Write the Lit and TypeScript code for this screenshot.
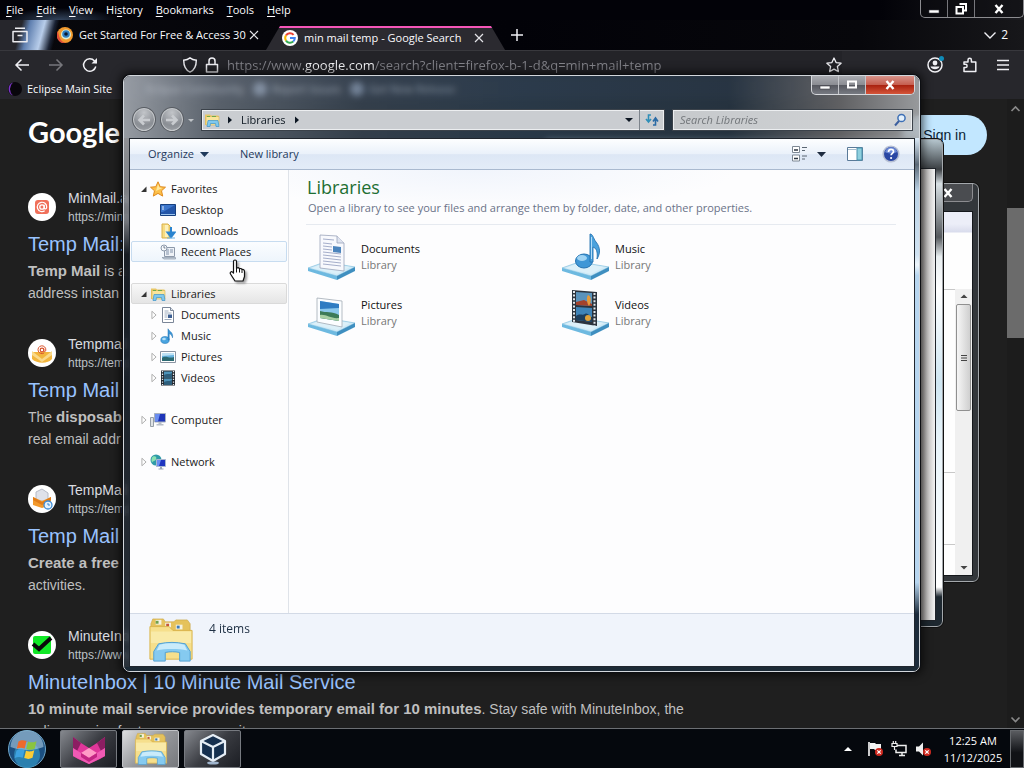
import { LitElement, html, css, svg, nothing } from "lit";
import { customElement, property } from "lit/decorators.js";

const shared = css`
  * { box-sizing: border-box; }
  button { font: inherit; color: inherit; background: none; border: 0; padding: 0; margin: 0; display: flex; align-items: center; text-align: left; }
  a { color: inherit; text-decoration: none; }
  svg { display: block; flex: none; }
`;

const icon = (size: number, body: unknown, box = size) =>
  html`<svg width=${size} height=${size} viewBox="0 0 ${box} ${box}" fill="none" aria-hidden="true">${body}</svg>`;

const closeGlyph = svg`<path d="M4 4l8 8M12 4l-8 8" stroke="#e4e4e8" stroke-width="1.2"/>`;

const folderSmall = svg`
  <path d="M1 4V2.5h5l1 1h7.5V13H1z" fill="#e8c767"/>
  <path d="M2 4.5h13V13H2z" fill="#f9e59b" stroke="#d8b24e" stroke-width=".6"/>
  <path d="M3 4.5h3M8 4.5h4" stroke="#6faa4b" stroke-width="1.2"/>
  <path d="M3 14.5l1-6h10l1 6h-3l-.5-3h-5l-.5 3z" fill="#7fc8ee" stroke="#3d93c8" stroke-width=".7"/>`;

const folderLarge = svg`
  <path d="M3 7l2-5h11l2 3h9l2-2h12l3 4v36H3z" fill="#e5c25c" stroke="#c9a33f" stroke-width=".6"/>
  <path d="M8 3h6v5H8z" fill="#f5f2e0"/><path d="M8 4h3v3H8z" fill="#6ea04e"/>
  <path d="M18 6h6v5h-6z" fill="#f5f2e0"/><path d="M19 7h3v3h-3z" fill="#c4553a"/>
  <path d="M29 8h7v5h-7z" fill="#f5f2e0"/><path d="M30 9h3v3h-3z" fill="#3c7ab5"/>
  <path d="M2 10h20l4 4h20v30H2z" fill="#f6df8c" stroke="#d9b44c"/>
  <path d="M3 15h42v12H3z" fill="#fbeeb4" opacity=".7"/>
  <path d="M6 46V36l5-8c10-2 18-2 28 0l5 8v10H33v-9c-5-1-10-1-15 0v9z" fill="#85caf0" stroke="#4f9fd2"/>
  <path d="M12 29c9-2 17-2 26 0l3 6c-10-2-22-2-32 0z" fill="#c9ebfb"/>`;

const small: Record<string, unknown> = {
  star: svg`<path d="M8 .8l2.2 4.9 5.3.5-4 3.6 1.2 5.3L8 12.4l-4.7 2.7 1.2-5.3-4-3.6 5.3-.5z" fill="#fcc04a" stroke="#e08a1e"/><path d="M8 3l1.400 3.600 3 .4-6.400 3z" fill="#ffe9a0"/>`,
  desktop: svg`<path d="M.5 2.500h15v11H.5z" fill="#2456a8" stroke="#17407f"/><path d="M1 3h14L3 10H1z" fill="#3c76cc"/><path d="M1 12.500h14" stroke="#9cc4ee"/><path d="M2 5h2M2 7h2" stroke="#dbe9fb"/>`,
  downloads: svg`<path d="M2 1h6l2 2v12H2z" fill="#f7dc83" stroke="#d9b04a"/><path d="M5 2h3v12H5z" fill="#fdf0bb"/><path d="M11 4v6M7.500 9.500L11 14l3.500-4.500z" fill="#2b84cf" stroke="#2b84cf" stroke-width="2"/><path d="M7 15h8" stroke="#6bb1e5"/>`,
  recent: svg`<path d="M4.500 3.500h10v9h-10z" fill="#eef2f7" stroke="#8d99aa"/><path d="M6 6h3M10 6h3M6 8h3M10 8h3M6 10h3" stroke="#8192aa"/><path d="M2 13.500h13.500v1.500H4z" fill="#c5cfdb" stroke="#8d99aa" stroke-width=".7"/><circle cx="4" cy="4" r="3" fill="#f8fafc" stroke="#8d99aa"/><path d="M4 2v2h1.500" stroke="#55657b" stroke-width=".8"/>`,
  libraries: folderSmall,
  documents: svg`<path d="M2.500.5h8l3 3v12h-11z" fill="#fff" stroke="#7b8698"/><path d="M10.500.5v3h3" stroke="#7b8698" fill="#dfe6ee"/><path d="M4.500 4h4M4.500 6h7M4.500 8h3M4.500 10h3M4.500 12.500h7" stroke="#8797ad" stroke-width=".8"/><path d="M8 7.500h4v3.500H8z" fill="#3d5f92"/>`,
  music: svg`<ellipse cx="5" cy="12" rx="4.200" ry="3.400" fill="#4aa5e0" stroke="#2277b8" stroke-width=".6"/><path d="M8 12V.8c1.500 3 5.500 3.500 4.500 9-.5-2.500-2-4-3.300-4V12z" fill="#3b97d8" stroke="#1c6fae" stroke-width=".5"/><ellipse cx="4" cy="11" rx="1.800" ry="1.200" fill="#b4def7"/>`,
  pictures: svg`<path d="M.5 2.500h15v11H.5z" fill="#fff" stroke="#8a94a2"/><path d="M2 4h12v8H2z" fill="#67b3df"/><path d="M2 9c4-3 7 1 12-1v4H2z" fill="#2c6a72"/><path d="M2 4h12v2L2 7z" fill="#bfe2f5"/>`,
  videos: svg`<path d="M1 .5h14v15H1z" fill="#20262e"/><path d="M4 1.500h8v6H4zM4 8.500h8v6H4z" fill="#4d93b9"/><path d="M4 5c3-2 5 0 8-2v4.500H4zM4 12c3-2 5 0 8-2v4.500H4z" fill="#2d5e7c"/><path d="M2.500 1v14M13.500 1v14" stroke="#e6ecf0" stroke-width="1.300" stroke-dasharray="1.300 1.300"/>`,
  computer: svg`<path d="M.5 5.500h3v9h-3z" fill="#dfe3e6" stroke="#98a0a8"/><path d="M4.500 1.500h11v8.500h-11z" fill="#1e35b8" stroke="#a8b2c0"/><path d="M5 2h5L8 9.500H5z" fill="#6a8df0"/><path d="M8.500 10h3v2h2v1.500h-7V12h2z" fill="#b7bec8"/>`,
  network: svg`<circle cx="6" cy="6" r="5.500" fill="#2f9aa8"/><path d="M3 2.500c3-1 4 1 3 3s-3 1-4 3c-1-2-.5-5 1-6z" fill="#8ce0b0"/><path d="M6.500 5.500h9v7h-9z" fill="#1e35c0" stroke="#a8b8d0"/><path d="M7 6h4l-2 6H7z" fill="#6a8df0"/><path d="M10 13h2v1.500h1.500v1h-5v-1H10z" fill="#9aa6b5"/>`,
};

const plate = svg`
  <path d="M0 35L17 29 47 34 29 43z" fill="#cfeaf7" stroke="#8fc6e2" stroke-width=".8"/>
  <path d="M4 35l13-5 25 4-13 7z" fill="#dcf0f9"/>
  <path d="M0 35l29 8v4L0 38z" fill="#6db9e0"/><path d="M29 43l18-9v4L29 47z" fill="#3f8fc0"/>`;

const large: Record<string, unknown> = {
  Documents: svg`${plate}<path d="M12 2l17 1 7 7v28l-24-3z" fill="#f8f9fd" stroke="#9aa3ba" stroke-width=".8"/><path d="M29 3v7h7" fill="#dfe4f0" stroke="#9aa3ba" stroke-width=".8"/><path d="M15 6l11 1M15 10l9 1M15 13l9 1M15 16l9 1M15 19l18 2M15 22l18 2M15 25l18 2M15 28l18 2M15 31l18 2" stroke="#9ba5c4" stroke-width=".9"/><path d="M25 13l8 1v6l-8-1z" fill="#4b84bd"/>`,
  Music: svg`${plate}<ellipse cx="22" cy="28" rx="8.500" ry="7" fill="#3f97d6" stroke="#2573b1"/><ellipse cx="20" cy="25" rx="5" ry="3" fill="#9fd3f3"/><path d="M28 29V1c3 0 3 4 6 8 5 6 4 12 1 17 1-8-1-11-4-12v15z" fill="#4ba2dd" stroke="#2573b1" stroke-width=".9"/><path d="M29.500 4v22" stroke="#b4defa"/>`,
  Pictures: svg`${plate}<path d="M9 9l25 3v26L9 33z" fill="#fbfdff" stroke="#a2abb5" stroke-width=".8"/><path d="M12 12l19 3v17l-19-3z" fill="#8cc8ec"/><path d="M12 12l19 3v4l-19 1z" fill="#2f7cc2"/><path d="M12 22c6 2 12 0 19 4v6l-19-3z" fill="#3c7a58"/><path d="M12 26c6-1 11 4 19 3v3l-19-3z" fill="#a8cfa4"/>`,
  Videos: svg`${plate}<path d="M10 1l25 2v34l-25-4z" fill="#2b333d"/><path d="M14 3l16 1v13l-16-1z" fill="#5a93bc"/><path d="M14 18l16 1v14l-16-2z" fill="#3f84b8"/><path d="M14 13l8-2 8 4v2l-16-1z" fill="#a3422c"/><path d="M26 6c4 1 3 8 1 11-2-2-3-9-1-11z" fill="#e59a3b"/><path d="M14 27c4-3 6 0 9-2s5 4 7 3v5l-16-2z" fill="#1e3f5e"/><circle cx="26" cy="29" r="3" fill="#e0a23a"/><path d="M12 2v31M32.500 4v33" stroke="#e4e9ee" stroke-width="2" stroke-dasharray="2 1.600"/>`,
};

@customElement("caption-buttons")
class CaptionButtons extends LitElement {
  @property({ type: Boolean, reflect: true }) active = false;
  @property({ type: Boolean, reflect: true }) restored = false;
  static styles = [shared, css`
    :host { display: flex; height: 18px; border: 1px solid #8c8c90; border-top: 0; border-radius: 0 0 5px 5px; overflow: hidden; background: rgba(12, 12, 16, .5); }
    button { width: 27px; justify-content: center; border-right: 1px solid #77777c; }
    .close { width: 48px; border-right: 0; }
    :host([active]) { height: 19px; border-color: #d6d8dc; background: linear-gradient(#a9abb0, #8b8d93 48%, #55575e 50%, #777a82); }
    :host([active]) button { border-color: #c4c6ca; }
    :host([active]) .close { background: linear-gradient(#d8938a, #c65f50 48%, #a8200e 50%, #d4553a); }
  `];
  render() {
    return html`
      <button aria-label="Minimize">${icon(16, svg`<path d="M3 9h10v3H3z" fill="#fff" stroke="#3c3c44" stroke-width=".6"/>`)}</button>
      <button aria-label="Maximize">${icon(16, this.restored
        ? svg`<path d="M6.500 3h6.500v6.500h-2M3.500 6H10v6.500H3.500z" stroke="#fff" stroke-width="2"/>`
        : svg`<path d="M4 4.500h8v6H4z" stroke="#fff" stroke-width="2"/>`)}</button>
      <button class="close" aria-label="Close">${icon(16, svg`<path d="M4.500 4l7 8M11.500 4l-7 8" stroke="#fff" stroke-width="2.400"/>`)}</button>`;
  }
}

@customElement("search-result")
class SearchResult extends LitElement {
  @property() site = "";
  @property() url = "";
  @property() heading = "";
  @property({ attribute: false }) mark: unknown = nothing;
  static styles = [shared, css`
    :host { display: block; }
    .source { display: flex; align-items: center; gap: 12px; }
    .mark { width: 28px; height: 28px; border-radius: 50%; background: #fff; display: grid; place-items: center; overflow: hidden; }
    .site { font-size: 14px; line-height: 20px; color: #dadce0; }
    .url { font-size: 12px; line-height: 18px; color: #bdc1c6; }
    h3 { margin: 5px 0 3px; font-size: 20px; line-height: 26px; font-weight: 400; color: #99c3ff; white-space: nowrap; }
    p { margin: 0; font-size: 14px; line-height: 22px; color: #bfbfbf; white-space: nowrap; }
    ::slotted(b) { font-size: 15px; line-height: 20px; }
  `];
  render() {
    return html`
      <div class="source"><span class="mark">${this.mark}</span>
        <div><div class="site">${this.site}</div><div class="url">${this.url}</div></div></div>
      <h3><a href="#">${this.heading}</a></h3>
      <p><slot></slot></p>`;
  }
}

@customElement("browser-window")
class BrowserWindow extends LitElement {
  static styles = [shared, css`
    :host { display: flex; flex-direction: column; min-height: 0; color: #fbfbfe; font: 11px/16px "Open Sans", "Noto Sans", sans-serif; }
    .menu { display: flex; align-items: flex-start; justify-content: space-between; height: 20px; padding: 0 0 0 6px; background: radial-gradient(60px 12px at 60px 20px, #33445c, transparent), linear-gradient(90deg, #020208 86%, #1c1c20); }
    .items { display: flex; gap: 13px; line-height: 20px; }
    .items u { text-underline-offset: 2px; }
    .tabs { display: flex; align-items: center; height: 30px; padding: 0 16px 0 12px; background: linear-gradient(105deg, #26262c 22px, #6080b0 30px, #b8cdea 44px, #1a2233 54px, transparent 58px), linear-gradient(90deg, #08080c, #020208 50%, #07070b 84%, #17171a); }
    .view { margin-right: 29px; }
    .tab { display: flex; align-items: center; gap: 6px; min-width: 0; }
    .tab .title { width: 161px; white-space: nowrap; }
    .active { align-self: flex-end; height: 24px; margin-left: 4px; padding: 0 18px 0 16px; background: linear-gradient(#f556b8 2px, #2b2a30 2px); clip-path: polygon(14px 0, calc(100% - 14px) 0, 100% 100%, 0 100%); }
    .add { margin-left: 4px; }
    .list { margin-left: auto; gap: 4px; line-height: 22px; font-size: 12px; }
    .nav { display: flex; align-items: center; height: 28px; padding: 0 14px; background: #27272c; border-top: 1px solid #38383d; }
    .history { display: flex; gap: 18px; flex: none; }
    .address { display: flex; align-items: center; gap: 6px; flex: 0 1 660px; margin-left: 84px; background: #232328; height: 27px; min-width: 0; }
    .address input { flex: 1; min-width: 0; border: 0; padding: 0 0 0 1px; height: 24px; font: 13px/24px "Open Sans", "Noto Sans", sans-serif; color: transparent; -webkit-text-fill-color: transparent; background: linear-gradient(90deg, #85858c 77px, #fbfbfe 77px, #fbfbfe 149px, #85858c 149px); -webkit-background-clip: text; background-clip: text; outline: 0; }
    .tools { display: flex; gap: 18px; margin-left: auto; }
    .marks { display: flex; align-items: center; height: 21px; padding-left: 7px; background: #27272c; gap: 8px; }
    .marks a { display: flex; align-items: center; gap: 4px; }
    .marks .next { margin-left: 26px; }
    .page { flex: 1; min-height: 0; display: grid; grid-template-columns: 1fr 17px; background: #1f1f1f; font-family: "Liberation Sans", Arial, sans-serif; overflow: hidden; }
    .content { min-width: 0; min-height: 0; overflow: hidden; padding: 0 20px 0 28px; }
    .head { display: flex; justify-content: space-between; align-items: flex-start; padding-top: 16px; height: 89px; }
    .logo { font: 700 29px/34px "Lato", sans-serif; color: #fff; }
    .signin { height: 40px; padding: 0 21px; border-radius: 20px; background: #c2e7ff; color: #0a1d35; font-size: 14px; }
    .results { display: flex; flex-direction: column; gap: 30px; }
    .scroll { background: #1c1c1c; display: flex; flex-direction: column; }
    .thumb { height: 130px; background: #6b6b6b; margin: 93px 0 auto; }
  `];
  render() {
    const chevron = (d: string) => icon(16, svg`<path d=${d} stroke="#8a8a8a" stroke-width="1.600"/>`);
    const globe = icon(16, svg`<circle cx="8" cy="8" r="7" fill="#b8c4da"/>`);
    return html`
      <div class="menu">
        <nav class="items">${["File", "Edit", "View", "History", "Bookmarks", "Tools", "Help"].map((m) => {
          const k = m === "History" ? 2 : 0;
          return html`<button><span>${m.slice(0, k)}<u>${m[k]}</u>${m.slice(k + 1)}</span></button>`;
        })}</nav>
        <caption-buttons restored></caption-buttons>
      </div>
      <div class="tabs">
        <button class="view" aria-label="View">${icon(16, svg`<path d="M1 4.500h14v10.200H1zM3 1.200h10" stroke="#ececf0" stroke-width="1.500" stroke-linejoin="round"/><path d="M5.500 8.500h5" stroke="#ececf0" stroke-width="1.500"/>`)}</button>
        <div class="tab">
          ${icon(16, svg`<circle cx="8" cy="8" r="8" fill="#f29a2e"/><path d="M1 4a8 8 0 0 0 9 12c-5 0-8-4-9-12z" fill="#e0503a"/><circle cx="9" cy="7.500" r="5" fill="#d9ecd0"/><circle cx="9" cy="7" r="3.800" fill="#2f7ec0"/><circle cx="9" cy="7" r="1.800" fill="#0b1a2c"/>`)}
          <span class="title">Get Started For Free &amp; Access 30</span>
          <button aria-label="Close tab">${icon(16, closeGlyph)}</button>
        </div>
        <div class="tab active">
          ${icon(16, svg`<circle cx="8" cy="8" r="8" fill="#fff"/><path d="M11.600 4.800A4.800 4.800 0 0 0 4 5.400" stroke="#ea4335" stroke-width="2"/><path d="M4 5.400a4.800 4.800 0 0 0 0 5.200" stroke="#fbbc04" stroke-width="2"/><path d="M4 10.600a4.800 4.800 0 0 0 7.200 1" stroke="#34a853" stroke-width="2"/><path d="M8 8h4.800a4.800 4.800 0 0 1-1.600 3.600" stroke="#4285f4" stroke-width="2"/>`)}
          <span class="title">min mail temp - Google Search</span>
          <button aria-label="Close tab">${icon(16, closeGlyph)}</button>
        </div>
        <button class="add" aria-label="New tab">${icon(16, svg`<path d="M8 2v12M2 8h12" stroke="#f0f0f4" stroke-width="1.500"/>`)}</button>
        <button class="list">${icon(14, svg`<path d="M1.500 4.500L7 10l5.500-5.500" stroke="#f0f0f4" stroke-width="1.400"/>`)}<span>2</span></button>
      </div>
      <div class="nav">
        <div class="history">
          <button aria-label="Back">${icon(16, svg`<path d="M15 8H2M7.500 2.500L2 8l5.500 5.500" stroke="#f0f0f4" stroke-width="1.500"/>`)}</button>
          <button aria-label="Forward">${icon(16, svg`<path d="M1 8h13M8.500 2.500L14 8l-5.500 5.500" stroke="#77777c" stroke-width="1.500"/>`)}</button>
          <button aria-label="Reload">${icon(16, svg`<path d="M13.800 9.500A6.200 6.200 0 1 1 12.500 4l2 2" stroke="#f0f0f4" stroke-width="1.500"/><path d="M15 1v5.500H9.500z" fill="#f0f0f4"/>`)}</button>
        </div>
        <div class="address">
          ${icon(16, svg`<path d="M8 .9c2 1.600 4 2.100 6.300 2.300 0 5.800-1.800 9.800-6.300 12-4.500-2.200-6.300-6.200-6.300-12C4 3 6 2.500 8 .9z" stroke="#f0f0f4" stroke-width="1.400"/>`)}
          ${icon(16, svg`<path d="M2.500 7.500h11v7.500h-11zM5 7V4a3 3 0 0 1 6 0v3" stroke="#f0f0f4" stroke-width="1.500" stroke-linejoin="round"/>`)}
          <input aria-label="Address" readonly .value=${"https://www.google.com/search?client=firefox-b-1-d&q=min+mail+temp"}>
          <button aria-label="Bookmark this page">${icon(16, svg`<path d="M8 1l2.100 4.600 5 .6-3.700 3.400 1 5L8 12.100l-4.400 2.500 1-5L.9 6.200l5-.6z" stroke="#f0f0f4" stroke-width="1.300" stroke-linejoin="round"/>`)}</button>
        </div>
        <div class="tools">
          <button aria-label="Account">${icon(18, svg`<circle cx="9" cy="9" r="7" stroke="#f0f0f4" stroke-width="1.500"/><circle cx="9" cy="7" r="2.400" fill="#f0f0f4"/><path d="M4.500 10.500h9c-1 3.500-8 3.500-9 0z" fill="#f0f0f4"/><circle cx="15.500" cy="2.500" r="2.500" fill="#0f8cb8"/>`)}</button>
          <button aria-label="Extensions">${icon(16, svg`<path d="M2 14.500v-4h1.500a1.600 1.600 0 0 0 0-3.200H2V5h4V3a1.700 1.700 0 0 1 3.400 0v2h4.400v9.500z" stroke="#f0f0f4" stroke-width="1.500" stroke-linejoin="round"/>`)}</button>
          <button aria-label="Menu">${icon(14, svg`<path d="M1 2.500h12M1 7h12M1 11.500h12" stroke="#f0f0f4" stroke-width="1.400"/>`)}</button>
        </div>
      </div>
      <div class="marks">
        <a href="#">${icon(16, svg`<circle cx="8" cy="8" r="7" fill="#08060c"/><path d="M6 1.500a7 7 0 0 0 0 13 8.500 8.500 0 0 1 0-13z" fill="#7d35c8"/>`)}Eclipse Main Site</a>
        <a class="next" href="#">Eclipse Community</a>
        <a href="#">${globe}Report Issues</a>
        <a href="#">${globe}Get New Release</a>
      </div>
      <div class="page">
        <div class="content">
          <div class="head"><span class="logo">Google</span><button class="signin">Sign in</button></div>
          <div class="results">
            <search-result site="MinMail.app" url="https://minmail.app" heading="Temp Mail:"
              .mark=${icon(28, svg`<rect x="7" y="7" width="14" height="14" rx="3" fill="#f0705a"/><circle cx="14" cy="14" r="2.200" stroke="#fff" stroke-width="1.300"/><path d="M16.200 11.800v3c0 1.800 2.500 1.500 2.500-.8a4.700 4.700 0 1 0-2 3.800" stroke="#fff" stroke-width="1.200"/>`)}>
              <b>Temp Mail</b> is a<br>address instan</search-result>
            <search-result site="Tempmail" url="https://tempmail" heading="Temp Mail"
              .mark=${icon(28, svg`<path d="M4 13h20v7c-4 5-15 5-20 0z" fill="#f2b53c"/><path d="M4 12l10 8 10-8v4l-10 7-10-7z" fill="#f9d98a"/><circle cx="14" cy="11" r="1.800" stroke="#d9542e" stroke-width="1.200"/><path d="M15.800 9.500v2.500c0 1.200 2 1 2-1a3.900 3.900 0 1 0-1.800 3" stroke="#d9542e"/>`)}>
              The <b>disposab</b><br>real email addr</search-result>
            <search-result site="TempMail" url="https://tempmail" heading="Temp Mail"
              .mark=${icon(28, svg`<path d="M8 7l6-3 6 4v8H8z" fill="#dfe2ea" stroke="#b5bac6"/><path d="M5 12l9 4 9-4v8l-9 3-9-3z" fill="#f39a2c"/><path d="M5 12l9 5 9-5v3l-9 5-9-5z" fill="#e07d1a"/><circle cx="20" cy="20" r="4" fill="#e4f1fc" stroke="#3b8bd6" stroke-width="1.300"/><path d="M20 18v2h2" stroke="#3b8bd6"/>`)}>
              <b>Create a free</b><br>activities.</search-result>
            <search-result site="MinuteInbox" url="https://www.minuteinbox" heading="MinuteInbox | 10 Minute Mail Service"
              .mark=${icon(28, svg`<rect x="5" y="5" width="18" height="18" rx="2" fill="#12e827"/><path d="M5 13l6 5L23 7" stroke="#0a0a0a" stroke-width="4"/>`)}>
              <b>10 minute mail service provides temporary email for 10 minutes</b>. Stay safe with MinuteInbox, the<br>online service for temporary security.</search-result>
          </div>
        </div>
        <div class="scroll">${chevron("M4.500 12L8.500 8l4 4")}<div class="thumb"></div>${chevron("M4.500 5.500l4 4 4-4")}</div>
      </div>`;
  }
}

@customElement("explorer-window")
class ExplorerWindow extends LitElement {
  static styles = [shared, css`
    :host { display: flex; flex-direction: column; border: 1px solid #d3d7dc; border-radius: 7px; overflow: hidden; color: #1a1a1a; font: 11px/16px "Open Sans", "Noto Sans", sans-serif; box-shadow: 0 0 0 1px #0c0e12, 0 0 10px 3px rgba(0, 0, 0, .65); backdrop-filter: blur(3px); background: rgba(60, 72, 88, .2); }
    .glass { padding: 0 5px 0 6px; background: linear-gradient(90deg, rgba(178, 184, 192, .8), rgba(122, 134, 148, .6) 12%, rgba(66, 86, 106, .5) 30%, rgba(44, 68, 90, .6) 50%, rgba(38, 58, 76, .6) 76%, rgba(110, 110, 112, .8) 90%, rgba(180, 182, 184, .8)); }
    .caption { display: flex; justify-content: flex-end; height: 31px; align-items: flex-start; margin-right: -1px; }
    .bar { display: flex; align-items: center; height: 31px; padding-bottom: 6px; gap: 7px; }
    .arrows { display: flex; align-items: center; gap: 4px; width: 64px; padding-left: 2px; }
    .round { width: 25px; height: 25px; border-radius: 50%; border: 1px solid #595d63; background: radial-gradient(circle at 50% 20%, #c2c5c9, #8a8e94 60%, #a5a9ae); box-shadow: inset 0 0 0 1px #c5c8cb; justify-content: center; }
    .crumbs { display: flex; flex: 1; height: 22px; border: 1px solid #3b424a; box-shadow: inset 0 0 0 1px #eceef0; background: #cacdd1; padding: 0 4px 0 2px; align-items: center; min-width: 0; color: #0c1620; }
    .crumbs .drop { margin-left: auto; margin-right: 5px; }
    .crumbs .refresh { height: 20px; border-left: 1px solid #7d848c; padding-left: 4px; }
    .crumbs .locations { margin-left: 5px; }
    .crumbs .name { margin: 0 6px; }
    .find { display: flex; flex: 0 0 241px; height: 22px; border: 1px solid #3b424a; box-shadow: inset 0 0 0 1px #eceef0; background: linear-gradient(90deg, #c6c9cc, #d2d4d6); align-items: center; padding: 0 5px 0 7px; margin-right: 1px; }
    .find input { flex: 1; min-width: 0; border: 0; background: none; outline: 0; font: italic 11px/16px "Open Sans", "Noto Sans", sans-serif; padding: 0; }
    .find input::placeholder { color: #72767a; opacity: 1; }
    .body { display: grid; grid-template-columns: 5px 1fr 4px; flex: 1; min-height: 0; }
    .left { background: linear-gradient(rgba(170, 172, 176, .8), rgba(130, 134, 140, .8) 16%, rgba(20, 26, 34, .8) 22%, rgba(45, 55, 66, .7)); }
    .right { background: linear-gradient(#dcebf8, #5c6a78 5%, #bcd3e6 10%, #cfe2f2 22%, #eef6fc 24%, #b7d6f0 26%, #b7d6f0 84%, #1c2b3b 90%); }
    .base { height: 4px; background: #1c2a36; }
    .client { display: flex; flex-direction: column; min-width: 0; min-height: 0; border: 1px solid #20262e; background: #fdfdfe; }
    .command { display: flex; align-items: center; height: 31px; padding: 0 14px 0 18px; color: #1e395b; background: linear-gradient(#fdfeff, #eaf1fa 50%, #dde7f5 52%, #e3ecf8); border-bottom: 1px solid #a9b9cf; gap: 31px; }
    .command button { gap: 6px; }
    .icons { display: flex; margin-left: auto; gap: 18px; }
    .icons .view { gap: 8px; padding-right: 2px; }
    .panes { display: grid; grid-template-columns: 159px 1fr; flex: 1; min-height: 0; }
    .tree { border-right: 1px solid #dfe3e9; padding: 8px 0 0; display: flex; flex-direction: column; gap: 21px; }
    .group { display: flex; flex-direction: column; }
    .row { height: 21px; width: 156px; gap: 5px; padding-left: 7px; margin-left: 1px; border: 1px solid transparent; white-space: nowrap; }
    .row .arrow { margin-right: -4px; }
    .row.child { padding-left: 17px; }
    .row.hover { border-color: #c7dcf0; border-radius: 2px; background: linear-gradient(#fbfdff, #eef5fc); }
    .row.chosen { border-color: #dadada; border-radius: 2px; background: linear-gradient(#f8f8f8, #e5e5e5); }
    .main { padding: 7px 18px 0 17px; min-width: 0; background: radial-gradient(260px 40px at 30% 0, #f1f5fc, transparent); }
    h1 { margin: 0; padding-left: 1px; font-size: 18px; line-height: 20px; font-weight: 400; color: #1e6f33; }
    .hint { margin: 2px 0 0; padding-left: 2px; color: #6a7288; line-height: 18px; padding-bottom: 7px; border-bottom: 1px solid #e6eaf0; }
    .tiles { display: grid; grid-template-columns: 248px 248px; gap: 8px 6px; padding: 8px 0 0 2px; }
    .tile { gap: 5px; line-height: 16px; color: #111; }
    .tile small { display: block; font-size: 11px; color: #777; }
    .status { display: flex; gap: 15px; height: 53px; padding: 3px 18px; background: #f0f4fb; border-top: 1px solid #d3dae6; color: #1f3044; font-size: 12px; line-height: 24px; }
  `];

  row(label: string, key: string, mode: "open" | "shut" | "none", child = false, state = "") {
    const arrow = mode === "open"
      ? svg`<path d="M9 3v6.500H2.500z" fill="#333"/>`
      : mode === "shut" ? svg`<path d="M3.500 1.500l5 4.500-5 4.500z" fill="#fff" stroke="#a0a0a0"/>` : nothing;
    return html`<button class="row ${child ? "child" : ""} ${state}"><span class="arrow">${icon(10, arrow, 12)}</span>${icon(16, small[key])}<span>${label}</span></button>`;
  }

  render() {
    const tri = (d: string) => icon(10, svg`<path d=${d} fill="#0c1622"/>`);
    return html`
      <div class="glass">
        <div class="caption"><caption-buttons active></caption-buttons></div>
        <div class="bar">
          <div class="arrows">
            <button class="round" aria-label="Back">${icon(16, svg`<path d="M14 8H4M8 3.500L3.500 8 8 12.500" stroke="#c9ccd0" stroke-width="2.600"/>`)}</button>
            <button class="round" aria-label="Forward">${icon(16, svg`<path d="M2 8h10M8 3.500L12.500 8 8 12.500" stroke="#c9ccd0" stroke-width="2.600"/>`)}</button>
            ${icon(6, svg`<path d="M0 2h6L3 5z" fill="#c0c4c8"/>`)}
          </div>
          <div class="crumbs">
            ${icon(16, folderSmall)}
            <button class="locations" aria-label="Locations">${tri("M3 1.500v7L7 5z")}</button>
            <button class="name">Libraries</button>
            <button aria-label="Sublocations">${tri("M3 1.500v7L7 5z")}</button>
            <button class="drop" aria-label="Previous locations">${tri("M1 3h8L5 7z")}</button>
            <button class="refresh" aria-label="Refresh">${icon(16, svg`<path d="M7 3H4.500v6M2 7l2.500 3L7 7" stroke="#2f8fb8" stroke-width="1.600"/><path d="M9 13h2.500V7M9 9.500L11.500 6 14 9.500" stroke="#2a6aa5" stroke-width="1.600"/>`)}</button>
          </div>
          <label class="find"><input aria-label="Search Libraries" placeholder="Search Libraries">${icon(14, svg`<circle cx="8.500" cy="5" r="3.600" fill="#e4f0fb" stroke="#3d6fb5" stroke-width="1.500"/><path d="M6 8l-4 4.500" stroke="#3d5f9e" stroke-width="2"/>`)}</label>
        </div>
      </div>
      <div class="body">
        <div class="left"></div>
        <div class="client">
          <div class="command">
            <button>Organize ${icon(9, svg`<path d="M0 2h9L4.500 7z" fill="#1e395b"/>`)}</button>
            <button>New library</button>
            <div class="icons">
              <button class="view" aria-label="Change view">${icon(18, svg`<path d="M1.500 1.500h7v6h-7zM1.500 10h7v6h-7z" fill="#fff" stroke="#7d8894"/><path d="M3 5h4M3 13.500h4" stroke="#2b3540" stroke-width="1.600"/><path d="M11 2.500h5M11 5.500h3M11 11h5M11 14h3" stroke="#5a6672"/>`)}${icon(9, svg`<path d="M0 2h9L4.500 7z" fill="#1e2c40"/>`)}</button>
              <button aria-label="Preview pane">${icon(18, svg`<path d="M1.500 2.500h15v13h-15z" fill="#fff" stroke="#5a7a98"/><path d="M11 3h5v12h-5z" fill="#8fd0de" stroke="#4a93ae"/><path d="M2 4.500h9" stroke="#a6bccd"/>`)}</button>
              <button aria-label="Help">${icon(18, svg`<circle cx="9" cy="9" r="7.800" fill="#2a47a3" stroke="#b7c0d4" stroke-width="1.600"/><path d="M3 7a6.200 6.200 0 0 1 12 0c-4 2-8 2-12 0z" fill="#6d8ad6"/><path d="M6.500 7c0-3.500 5-3.500 5-.6 0 1.900-2.400 1.900-2.400 3.900" stroke="#fff" stroke-width="1.700"/><circle cx="9.100" cy="13" r="1.100" fill="#fff"/>`)}</button>
            </div>
          </div>
          <div class="panes">
            <nav class="tree">
              <div class="group">
                ${this.row("Favorites", "star", "open")}
                ${this.row("Desktop", "desktop", "none", true)}
                ${this.row("Downloads", "downloads", "none", true)}
                ${this.row("Recent Places", "recent", "none", true, "hover")}
              </div>
              <div class="group">
                ${this.row("Libraries", "libraries", "open", false, "chosen")}
                ${this.row("Documents", "documents", "shut", true)}
                ${this.row("Music", "music", "shut", true)}
                ${this.row("Pictures", "pictures", "shut", true)}
                ${this.row("Videos", "videos", "shut", true)}
              </div>
              <div class="group">${this.row("Computer", "computer", "shut")}</div>
              <div class="group">${this.row("Network", "network", "shut")}</div>
            </nav>
            <section class="main">
              <h1>Libraries</h1>
              <p class="hint">Open a library to see your files and arrange them by folder, date, and other properties.</p>
              <div class="tiles">
                ${["Documents", "Music", "Pictures", "Videos"].map((n) => html`<button class="tile">${icon(48, large[n])}<span>${n}<small>Library</small></span></button>`)}
              </div>
            </section>
          </div>
          <footer class="status">${icon(46, folderLarge, 48)}<span>4 items</span></footer>
        </div>
        <div class="right"></div>
      </div>
      <div class="base"></div>`;
  }
}

@customElement("task-bar")
class TaskBar extends LitElement {
  static styles = [shared, css`
    :host { display: flex; align-items: center; height: 40px; background: #05080d; border-top: 1px solid #6c6f73; color: #fff; font: 11px/17px "Open Sans", "Noto Sans", sans-serif; padding-left: 8px; }
    .apps { display: flex; gap: 5px; margin-left: 14px; }
    .app { width: 57px; height: 38px; justify-content: center; border: 1px solid #777a80; border-radius: 2px; background: linear-gradient(135deg, #85888e, #3a3c42 50%, #1c1e24); }
    .app.current { border-color: #c0c2c6; background: linear-gradient(135deg, #dcdddf, #96989c 50%, #77797d); }
    .tray { display: flex; align-items: center; margin-left: auto; gap: 8px; }
    .flag { margin-left: 6px; }
    .clock { text-align: center; width: 60px; margin-left: 4px; }
    .peek { width: 14px; height: 38px; border: 1px solid #66696d; background: linear-gradient(#5a5c60, #101216 60%); align-self: flex-end; margin-left: -1px; }
  `];
  render() {
    const cross = svg`<circle cx="12" cy="11" r="4" fill="#cf2a20"/><path d="M10.300 9.300l3.400 3.400M13.700 9.300l-3.400 3.400" stroke="#fff" stroke-width="1.200"/>`;
    return html`
      <button aria-label="Start">${icon(38, svg`<circle cx="19" cy="19" r="18.500" fill="#1b4f80" stroke="#6fa6c8"/><circle cx="19" cy="25" r="13" fill="#2f8cba" opacity=".8"/><path d="M2.500 17a16.500 16.500 0 0 1 33 0c-10 4-23 4-33 0z" fill="#a5c4da" opacity=".65"/>
        <path d="M10.500 11.500c3-2 5-1.500 8-.5l-1.800 7.500c-3-1.200-5-1.200-8 .3z" fill="#ee6a2c"/><path d="M20 11.500c3 1.200 5 1.200 8.500-.3l-1.800 7.500c-3 1.400-5 1.400-8.500.2z" fill="#8ac43f"/><path d="M8.500 20.500c3-1.500 5-1.500 8-.3l-1.800 7.500c-3-1.200-5-1-8 .3z" fill="#3da2e0"/><path d="M18 20.700c3 1.200 5 1 8.300-.4l-1.800 7.500c-3 1.400-5 1.400-8.300.3z" fill="#fbcc35"/>`)}</button>
      <div class="apps">
        <button class="app" aria-label="Workspace">${icon(36, svg`<path d="M2 6l8 6 8 5 8-5 8-6v19l-5 3-11 5-11-5-5-3z" fill="#e0369a"/><path d="M2 6l8 6-4 8-4-3zM34 6l-8 6 4 8 4-3z" fill="#8c1e62"/><path d="M18 17l8 5-8 5-8-5z" fill="#ff9bc6"/><path d="M2 17l16 10 16-10v8l-16 8-16-8z" fill="#f05ab4"/><path d="M10 22l8 5 8-5v4l-8 5-8-5z" fill="#c22682"/>`)}</button>
        <button class="app current" aria-label="Explorer">${icon(34, folderLarge, 48)}</button>
        <button class="app" aria-label="VirtualBox">${icon(32, svg`<path d="M16 2l12 6v13l-12 7-12-7V8z" fill="#16304f" stroke="#e6eef6" stroke-width="2.200" stroke-linejoin="round"/><path d="M4 8l12 6 12-6M16 14v14" stroke="#e6eef6" stroke-width="2.200"/><ellipse cx="16" cy="30" rx="6" ry="1.600" fill="#9fb4cc"/>`)}</button>
      </div>
      <div class="tray">
        <button aria-label="Show hidden icons">${icon(10, svg`<path d="M1 7h8L5 3z" fill="#fff"/>`)}</button>
        <button class="flag" aria-label="Action center">${icon(16, svg`<path d="M2 1v14" stroke="#fff" stroke-width="1.600"/><path d="M3 2h5l1 1h5v6H8L7 8H3z" fill="#f4f4f4"/>${cross}`)}</button>
        <button aria-label="Network">${icon(16, svg`<path d="M6 4.500h9v7H5v-3M8 14.500h6M11 12v2" stroke="#eee" stroke-width="1.500"/><path d="M1 2.500h5v3H1zM2.300 0v3M4.700 0v3M3.500 5v4" stroke="#eee" stroke-width="1.200"/>`)}</button>
        <button aria-label="Volume">${icon(16, svg`<path d="M1 5.500h3L8 1.500v13L4 10.500H1z" fill="#f0f0f0"/>${cross}`)}</button>
        <div class="clock">12:25 AM<br>11/12/2025</div>
        <button class="peek" aria-label="Show desktop"></button>
      </div>`;
  }
}

@customElement("app-root")
class AppRoot extends LitElement {
  static styles = [shared, css`
    :host { display: flex; flex-direction: column; height: 100vh; position: relative; overflow: hidden; background: #1f1f1f; }
    browser-window { flex: 1; }
    .float { position: absolute; }
    .main { left: 123px; right: 104px; top: 75px; bottom: 96px; }
    .behind { border: 1px solid #a4a8ac; outline: 1px solid #111; border-radius: 6px; width: 400px; padding: 0 6px 5px; display: flex; flex-direction: column; }
    .middle { right: 81px; top: 139px; bottom: 141px; background: linear-gradient(#b4c4cc, #3a3e42 6%, #d8e0e4 9%, #55595d 20%, #e8eef0 24%, #fff 31%, #cfe6f2 50%, #e8f4fa 62%, #fff 92%, #1e2830 94%); }
    .middle .pane { margin-top: 28px; flex: 1; border: 1px solid #20242a; background: linear-gradient(270deg, #f2f2f2, #c9c7c6 8px, #8a8684 16px); }
    .rear { right: 45px; top: 183px; bottom: 186px; background: #33373b; padding-right: 5px; }
    .rear caption-buttons { align-self: flex-end; background: #4a4c50; }
    .rear .pane { margin-top: 9px; flex: 1; border: 1px solid #15181c; background: linear-gradient(#eceef8 12px, #d9dcec 20px, #fefefe 21px); display: flex; justify-content: flex-end; min-height: 0; }
    .lane { margin-top: 77px; width: 17px; background: #f0f0f0; display: flex; flex-direction: column; align-items: center; }
    .grip { width: 15px; height: 107px; margin: 1px 0 auto; border: 1px solid #909090; border-radius: 2px; background: linear-gradient(90deg, #f6f6f6, #cfcfcf); display: grid; place-items: center; }
    .lines { flex: 1; margin-top: 77px; border-top: 1px solid #c8c8c8; display: flex; flex-direction: column; justify-content: flex-end; }
    .lines i { height: 72px; border-top: 1px solid #c8c8c8; }
    .lines i + i { height: 31px; }
    .hand { left: 227px; top: 259px; filter: drop-shadow(2px 2px 1px rgba(0, 0, 0, .35)); }
  `];
  render() {
    return html`
      <browser-window></browser-window>
      <div class="float behind rear">
        <caption-buttons></caption-buttons>
        <div class="pane"><div class="lines"><i></i><i></i></div>
          <div class="lane">${icon(14, svg`<path d="M3.500 9h7L7 5.500z" fill="#444"/>`)}<div class="grip">${icon(8, svg`<path d="M1 1.500h6M1 4h6M1 6.500h6" stroke="#444"/>`)}</div>${icon(14, svg`<path d="M3.500 5h7L7 8.500z" fill="#444"/>`)}</div></div>
      </div>
      <div class="float behind middle"><div class="pane"></div></div>
      <explorer-window class="float main"></explorer-window>
      <div class="float hand">${icon(24, svg`<path d="M6.500 2.500c0-2 3-2 3 0v7l.5-.5c1-.6 2 0 2.500.8 1-.6 2-.2 2.500.7 1.200-.4 2.500.3 2.500 2v5l-1.500 4.500h-8L3.500 15c-1-1.500.8-3 2-1.800l1 1z" fill="#fff" stroke="#111" stroke-width="1.200" stroke-linejoin="round"/><path d="M9.500 9.500v4M12.500 10v3.500M15 11v3" stroke="#111"/>`)}</div>
      <task-bar></task-bar>`;
  }
}
